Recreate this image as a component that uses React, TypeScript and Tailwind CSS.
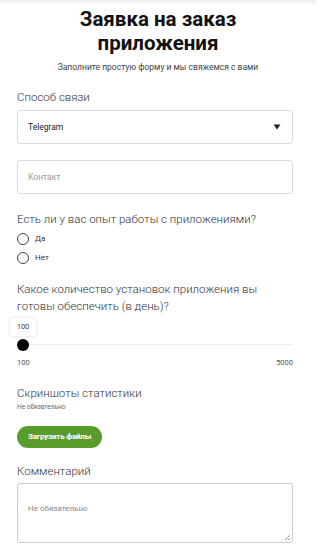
import React from "react";

export default function App() {
  return (
    <div
      className="w-[316px] min-h-[554px] bg-white text-[#333] relative"
      style={{ fontFamily: "Roboto, 'Noto Sans', sans-serif" }}
    >
      <div className="absolute top-0 left-0 right-0 h-[5px] bg-gradient-to-b from-[#ececec] to-white" />
      <div className="pl-[17px] pr-[23px] pt-[7px] flex flex-col">
        <h1 className="text-center text-[20.5px] leading-[24px] font-bold text-[#111] pl-[6px]">
          Заявка на заказ
          <br />
          приложения
        </h1>
        <p className="text-center text-[8.5px] leading-[12px] text-[#444] mt-[6px] pl-[6px]">
          Заполните простую форму и мы свяжемся с вами
        </p>

        <label className="mt-[16px] text-[11.5px] leading-[16px] text-[#333] font-light">Способ связи</label>
        <div className="mt-[5px] h-[34px] border border-[#ddd] rounded-[3px] flex items-center justify-between pl-[10px] pr-[11px]">
          <span className="text-[8.5px] text-[#222]">Telegram</span>
          <svg width="8" height="6" viewBox="0 0 8 6">
            <path d="M0.5 0.5 L7.5 0.5 L4 5.5 Z" fill="#222" />
          </svg>
        </div>

        <div className="mt-[16px] h-[34px] border border-[#ddd] rounded-[3px] flex items-center pl-[10px]">
          <span className="text-[8.5px] text-[#999]">Контакт</span>
        </div>

        <label className="mt-[17px] text-[11.5px] leading-[16px] text-[#333] font-light">
          Есть ли у вас опыт работы с приложениями?
        </label>
        <div className="mt-[6px] flex flex-col gap-[7px]">
          <div className="flex items-center gap-[6px]">
            <span className="w-[12px] h-[12px] rounded-full border border-[#444]" />
            <span className="text-[8px] text-[#333]">Да</span>
          </div>
          <div className="flex items-center gap-[6px]">
            <span className="w-[12px] h-[12px] rounded-full border border-[#444]" />
            <span className="text-[8px] text-[#333]">Нет</span>
          </div>
        </div>

        <label className="mt-[17px] text-[11.5px] leading-[17px] text-[#333] font-light">
          Какое количество установок приложения вы готовы обеспечить (в день)?
        </label>
        <div className="relative mt-[2px] h-[52px]">
          <div className="absolute left-[-7px] top-[1px] w-[26px] h-[18px] bg-white rounded-[2px] shadow-[0_0_3px_rgba(0,0,0,0.18)] flex items-center justify-center text-[7.5px] text-[#444]">
            100
          </div>
          <div className="absolute left-[6px] right-0 top-[27px] h-px bg-[#eee]" />
          <div className="absolute left-0 top-[22px] w-[12px] h-[12px] rounded-full bg-black" />
          <div className="absolute left-0 right-0 top-[40px] flex justify-between text-[7.5px] text-[#555]">
            <span>100</span>
            <span>5000</span>
          </div>
        </div>

        <label className="mt-[16px] text-[11.5px] leading-[16px] text-[#333] font-light">Скриншоты статистики</label>
        <span className="mt-[1px] text-[6.5px] leading-[10px] text-[#666]">Не обязательно</span>
        <div className="mt-[10px]">
          <button className="h-[22px] px-[11px] rounded-full bg-[#5a9b2d] text-white text-[8px] font-bold tracking-[-0.2px]">
            Загрузить файлы
          </button>
        </div>

        <label className="mt-[15px] text-[11.5px] leading-[16px] text-[#333] font-light">Комментарий</label>
        <div className="relative mt-[4px] h-[60px] border border-[#ccc] rounded-[3px] pl-[10px] pt-[10px]">
          <span className="text-[8px] text-[#888]">Не обязательно</span>
          <svg className="absolute right-[1px] bottom-[1px]" width="8" height="8" viewBox="0 0 8 8">
            <path d="M7 2 L2 7 M7 5 L5 7" stroke="#888" strokeWidth="0.8" />
          </svg>
        </div>
      </div>
    </div>
  );
}
